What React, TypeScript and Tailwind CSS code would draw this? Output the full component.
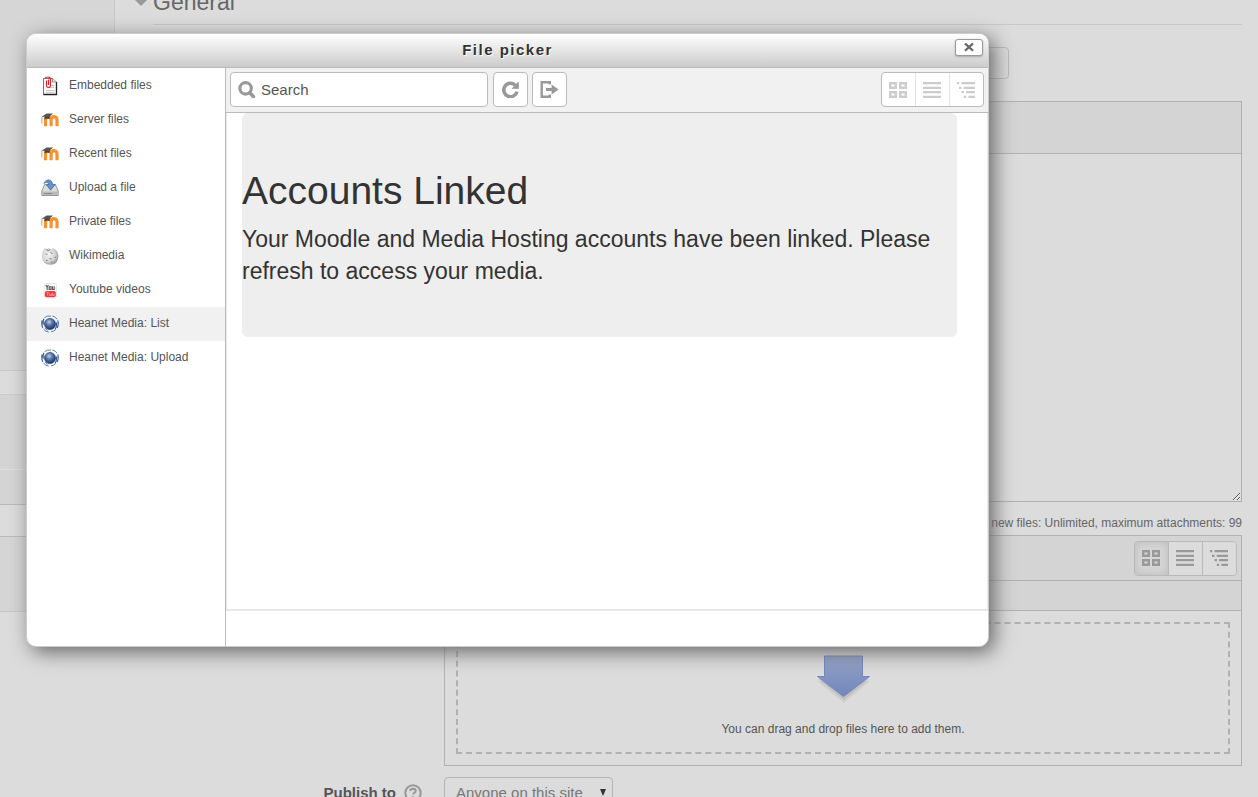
import React from 'react';

type IconProps = { className?: string };

function SearchIcon() {
  return (
    <svg width="18" height="18" viewBox="0 0 18 18" fill="none" stroke="#999" aria-hidden="true">
      <circle cx="7.6" cy="7.4" r="5.7" strokeWidth="3.2" />
      <path d="M11.8 11.8 15.4 15.4" strokeWidth="3.6" strokeLinecap="round" />
    </svg>
  );
}

function RefreshIcon() {
  return (
    <svg width="17" height="17" viewBox="0 0 17 17" fill="none" aria-hidden="true">
      <path d="M13.2 4.2A6.7 6.7 0 1 0 15 10.6" stroke="#999" strokeWidth="3.6" />
      <path d="M16.700 .8V7.600H10Z" fill="#999" stroke="#999" strokeWidth=".6" strokeLinejoin="round" />
    </svg>
  );
}

function LogoutIcon() {
  return (
    <svg width="19" height="17" viewBox="0 0 19 17" fill="none" aria-hidden="true">
      <path d="M9.800 3.600V1.200H1.700V15.800H9.800V13.400" stroke="#999" strokeWidth="2.400" />
      <path d="M6 7H11.600V3.400L18.600 8.500L11.600 13.600V10H6Z" fill="#999" />
    </svg>
  );
}

function GridIcon({ className }: IconProps) {
  return (
    <svg width="19" height="17" viewBox="0 0 19 17" fill="none" stroke="currentColor" strokeWidth="2.4" className={className} aria-hidden="true">
      <path d="M1.200 1.200H6.800V5.800H1.200ZM11.200 1.200H16.800V5.800H11.200ZM1.200 10.200H6.800V14.800H1.200ZM11.200 10.200H16.800V14.800H11.200Z" />
    </svg>
  );
}

function ListIcon({ className }: IconProps) {
  return (
    <svg width="19" height="17" viewBox="0 0 19 17" fill="currentColor" className={className} aria-hidden="true">
      <path d="M0 0H18V2.300H0ZM0 4.700H18V7H0ZM0 9H18V11.300H0ZM0 13.700H18V16H0Z" />
    </svg>
  );
}

function TreeIcon({ className }: IconProps) {
  return (
    <svg width="19" height="17" viewBox="0 0 19 17" fill="currentColor" className={className} aria-hidden="true">
      <path d="M0 0H2.300V2.300H0ZM4.500 0H18V2.300H4.500ZM2 4.700H4.500V7H2ZM6.700 4.700H18V7H6.700ZM4.500 9H7V11.300H4.500ZM9 9H18V11.300H9ZM6.800 13.700H9.200V16H6.800ZM11.300 13.700H18V16H11.300Z" />
    </svg>
  );
}

function EmbeddedIcon() {
  return (
    <svg width="18" height="20" viewBox="0 0 18 20" aria-hidden="true">
      <path d="M2.500 2.500H11.500L15.500 6V18.500H2.500Z" fill="#fafafa" stroke="#777" />
      <path d="M2.500 18.500H15.500V6" fill="none" stroke="#222" strokeWidth="1.300" />
      <path d="M11.500 2.500V6H15.500" fill="#ddd" stroke="#777" strokeWidth=".7" />
      <path d="M10.500 9.500H13.500M10.500 11.500H13.500M5 14.500H13.500M5 16.300H13.500" stroke="#ccc" />
      <path d="M5.500 4.500V9.500Q5.600 11.500 7.500 11.500Q9.500 11.500 9.500 9.500V3Q9.300 1 7 1Q4.500 1 3.800 2.600M7.500 3.500V9" fill="none" stroke="#ee1c24" strokeWidth="1.100" />
    </svg>
  );
}

function MoodleIcon() {
  return (
    <svg width="18" height="16" viewBox="0 0 18 16" aria-hidden="true">
      <path d="M4.500 14.200V8.200Q4.600 5.100 7.300 5.100Q10.100 5.100 10.100 8.200V14.200M10.100 8.200Q10.300 4.600 13.100 4.600Q16 4.700 16 8.200V14.200" fill="none" stroke="#f7922f" strokeWidth="3.200" />
      <path d="M3.500 4.600L9 4.200L8.400 7Q5.800 5.900 3.500 7.600Z" fill="#4a3f3a" />
      <path d="M.5 4.700L5.600 1.600L12 1.500L8.200 4.900Z" fill="#555" />
      <path d="M1 4.800L.7 11.500" stroke="#a98a70" strokeWidth=".8" />
    </svg>
  );
}

function UploadIcon() {
  return (
    <svg width="18" height="18" viewBox="0 0 18 18" aria-hidden="true">
      <path d="M3.700 5.500H14.300L17.200 12V16.500H.8V12Z" fill="#dcdedb" stroke="#8b8d89" strokeWidth=".9" />
      <path d="M1.200 12.500H16.800V16.100H1.200Z" fill="#b9bbb8" />
      <path d="M3 14.500H11" stroke="#888" strokeWidth="1.200" />
      <path d="M2.800 4.600Q5-.2 9.200 1.200Q11.400 2.200 11.600 5.400H14.200L9.600 11.200L5.400 5.800H7.800Q7.600 3.200 5.400 3.300Q4 3.400 2.800 4.600Z" fill="#6b93c7" stroke="#3f6eac" strokeWidth=".8" />
    </svg>
  );
}

function WikimediaIcon() {
  return (
    <svg width="18" height="20" viewBox="0 0 18 20" aria-hidden="true">
      <defs>
        <radialGradient id="wiki" cx=".4" cy=".4" r=".7">
          <stop offset="0" stopColor="#f4f4f4" />
          <stop offset=".6" stopColor="#d2d2d2" />
          <stop offset="1" stopColor="#858585" />
        </radialGradient>
      </defs>
      <path d="M3.600 2L5.600 3L8 1.800L9.400 3.400L12 2.200Q17.400 4.400 17.400 10.400Q16.800 18.600 9.400 18.800Q1.400 18.200.8 10.400Q.8 5.400 3.600 2Z" fill="url(#wiki)" />
      <path d="M4.500 8L6.500 8.400M9.500 6.500L11.500 7.500M8.500 12.500L10.500 13M13.500 11.500L15 11M5.600 3L7 5L9.400 3.400M5 14.500L6.500 14.500M10 16H11.500" fill="none" stroke="#777" strokeWidth=".9" />
    </svg>
  );
}

function YoutubeIcon() {
  return (
    <svg width="18" height="18" viewBox="0 0 18 18" aria-hidden="true">
      <rect x="3" y="2.500" width="12.500" height="14.500" rx="2" fill="#fafafa" stroke="#ddd" strokeWidth=".7" />
      <path d="M4.800 4L6.100 6.200L7.400 4M6.100 6.200V9M8.200 5.800H10V8.500H8.200ZM11.500 5.300V8.500H13.200V5.300" fill="none" stroke="#555" strokeWidth="1.100" />
      <rect x="3.800" y="10" width="11" height="6.200" rx="2" fill="#ee3a3c" />
      <path d="M5.600 11.500H7.800M6.700 11.500V14.800M8.800 12.500V14.500H10.200V12.500M11.600 11.800V14.500H13V12.800" fill="none" stroke="#fbb" strokeWidth=".7" />
    </svg>
  );
}

function HeanetIcon() {
  return (
    <svg width="18" height="18" viewBox="0 0 18 18" aria-hidden="true">
      <defs>
        <radialGradient id="globe" cx=".42" cy=".32" r=".7">
          <stop offset="0" stopColor="#c2cde0" />
          <stop offset=".45" stopColor="#5673a6" />
          <stop offset="1" stopColor="#142f66" />
        </radialGradient>
      </defs>
      <circle cx="9" cy="9" r="5.500" fill="url(#globe)" stroke="#1c3a70" strokeWidth=".7" />
      <path d="M1.200 5.500Q.2 9.500 1.800 12.800M16.800 5.500Q17.900 9.500 16.200 13M3 3.800Q1.600 6.500 2.400 9.500M15.500 7.500Q16 11.500 14 14.500" fill="none" stroke="#2b5590" strokeWidth="1.100" />
      <path d="M3.500 2.600Q6.500 .4 10 1.100M11.500 1Q15 2 16 4.200M2.600 14.200Q4.500 16.800 7.800 17.100M10 16.800Q13 16.600 14.600 14.800M4 13Q4.800 14.400 6.500 15.400" fill="none" stroke="#5d83b5" strokeWidth="1" />
    </svg>
  );
}

const repositories = [
  { name: 'Embedded files', Icon: EmbeddedIcon },
  { name: 'Server files', Icon: MoodleIcon },
  { name: 'Recent files', Icon: MoodleIcon },
  { name: 'Upload a file', Icon: UploadIcon },
  { name: 'Private files', Icon: MoodleIcon },
  { name: 'Wikimedia', Icon: WikimediaIcon },
  { name: 'Youtube videos', Icon: YoutubeIcon },
  { name: 'Heanet Media: List', Icon: HeanetIcon, active: true },
  { name: 'Heanet Media: Upload', Icon: HeanetIcon },
];

const views = [
  { label: 'Display folder with file icons', Icon: GridIcon },
  { label: 'Display folder with file details', Icon: ListIcon },
  { label: 'Display folder as file tree', Icon: TreeIcon },
];

function Sidebar() {
  return (
    <aside className="flex w-[115px] shrink-0 flex-col">
      <div className="h-[371px] border-r border-b border-[#c9c9c9] bg-[#d6d6d6]" />
      <div className="h-6 border-b border-[#cbcbcb]" />
      <div className="h-[75px] border-b border-[#dedede] bg-[#d4d4d4]" />
      <div className="h-[35px] border-b border-[#b9b9b9] bg-[#d4d4d4]" />
      <div className="h-8 border-b border-[#bbb]" />
      <div className="h-[75px] border-b border-[#c9c9c9] bg-[#d5d5d5]" />
    </aside>
  );
}

function FormPage() {
  return (
    <main className="min-w-0 flex-1 pr-4 pl-[38px]">
      <div className="relative h-[25px] border-b border-[#c8c8c8]">
        <svg className="absolute top-0 -left-[18px]" width="12" height="6" viewBox="0 0 12 6" aria-hidden="true">
          <path d="M0 0H12L6 6Z" fill="#999" />
        </svg>
        <h2 className="text-[23px] leading-[4px] text-[#666]">General</h2>
      </div>
      <div className="pl-[291px]">
        <input aria-label="Name" className="mt-[22px] block h-8 w-[565px] rounded-[4px] border border-[#bbb] px-3" />
        <div className="mt-[22px] border border-[#b1b1b1]">
          <div className="h-[52px] border-b border-[#b1b1b1] bg-[#d4d4d4]" />
          <textarea aria-label="Description" className="block h-[347px] w-full resize-y" />
        </div>
        <p className="pt-[14px] pb-1 text-right text-[12px] leading-[15px] text-[#666]">
          Maximum size for new files: Unlimited, maximum attachments: 99
        </p>
        <section className="border border-[#b1b1b1]">
          <div className="flex h-[45px] items-center justify-end border-b border-[#b1b1b1] bg-[#d4d4d4] pr-1">
            <div className="flex overflow-hidden rounded-[4px] border border-[#b9b9b9]">
              {views.map(({ label, Icon }, i) => (
                <button
                  key={label}
                  aria-label={label}
                  className={
                    i === 0
                      ? 'flex h-[33px] w-[33px] items-center justify-center bg-[#d6d6d6] text-[#999] shadow-[inset_0_0_10px_#bbb]'
                      : 'flex h-[33px] w-[34px] items-center justify-center border-l border-[#b9b9b9] bg-[#dcdcdc] text-[#999]'
                  }
                >
                  <Icon />
                </button>
              ))}
            </div>
          </div>
          <div className="h-[30px] border-b border-[#b1b1b1] bg-[#d4d4d4]" />
          <div className="p-[11px]">
            <div className="flex h-[132px] flex-col items-center border-2 border-dashed border-[#b1b1b1] pt-[30px]">
              <svg width="60" height="52" viewBox="0 0 60 52" className="shrink-0" aria-hidden="true">
                <defs>
                  <linearGradient id="arrow" x1="0" y1="0" x2="0" y2="1">
                    <stop offset="0" stopColor="#94a3c8" />
                    <stop offset="1" stopColor="#7187bb" />
                  </linearGradient>
                </defs>
                <path d="M11 6H50V27H57L31 49L4 27H11Z" fill="#000" opacity=".06" />
                <path d="M11 4H50V25H56L31 46L5 25H11Z" fill="#000" opacity=".08" />
                <path d="M11.500 2H49.500V22.500H56.500L30.500 42.500L4.500 22.500H11.500Z" fill="url(#arrow)" stroke="#7488bb" />
              </svg>
              <p className="mt-[15px] text-[12px] leading-[16px] text-[#555]">You can drag and drop files here to add them.</p>
            </div>
          </div>
        </section>
      </div>
      <div className="mt-[11px] flex">
        <div className="flex w-[291px] items-center justify-end gap-2 pr-[22px]">
          <label htmlFor="publish" className="text-[15px] font-bold text-[#555]">Publish to</label>
          <svg width="18" height="18" viewBox="0 0 18 18" fill="none" stroke="#999" aria-hidden="true">
            <circle cx="9" cy="9" r="7.700" strokeWidth="2" />
            <path d="M6.200 7Q6.400 4.700 9 4.700Q11.700 4.800 11.700 6.900Q11.700 8.200 10.300 8.900Q9.200 9.500 9.200 10.600M9.200 12V14" strokeWidth="2" />
          </svg>
        </div>
        <div className="relative">
          <select id="publish" className="h-8 w-[169px] appearance-none rounded-[4px] border border-[#b5b5b5] pl-[11px] text-[15px] text-[#777]">
            <option>Anyone on this site</option>
          </select>
          <svg className="pointer-events-none absolute top-[12px] right-[7px]" width="6" height="7" viewBox="0 0 6 7" aria-hidden="true">
            <path d="M0 0H6L3 7Z" fill="#333" />
          </svg>
        </div>
      </div>
    </main>
  );
}

function FilePicker() {
  return (
    <div
      role="dialog"
      aria-labelledby="picker-title"
      className="absolute top-[33px] left-[26px] flex h-[614px] w-[963px] flex-col overflow-hidden rounded-[10px] border border-[#ccc] bg-white shadow-[5px_5px_20px_0_#666]"
    >
      <header className="relative flex h-[34px] shrink-0 items-center justify-center border-b border-[#bbb] bg-linear-to-b from-white to-[#ccc] pb-[2px]">
        <h1 id="picker-title" className="text-[15px] leading-[20px] font-bold tracking-widest text-[#333] text-shadow-[1px_1px_1px_#fff]">
          File picker
        </h1>
        <button
          aria-label="Close"
          className="absolute top-[5px] right-[5px] flex h-[17px] w-[28px] items-center justify-center rounded-[3px] border border-[#999] bg-white shadow-[0_1px_2px_#aaa]"
        >
          <svg width="10" height="9" viewBox="0 0 10 9" stroke="#666" strokeWidth="2.200" aria-hidden="true">
            <path d="M1 .4 9 7.800M9 .4 1 7.800" />
          </svg>
        </button>
      </header>
      <div className="flex min-h-0 flex-1">
        <nav className="w-[199px] shrink-0 border-r border-[#bbb] pt-px">
          {repositories.map(({ name, Icon, active }) => (
            <a
              key={name}
              href="#"
              className={
                active
                  ? 'flex h-[34px] items-center bg-[#f1f1f1] pl-[14px] text-[12px] text-[#555]'
                  : 'flex h-[34px] items-center pl-[14px] text-[12px] text-[#555]'
              }
            >
              <Icon />
              <span className="pb-[2px] pl-[10px]">{name}</span>
            </a>
          ))}
        </nav>
        <div className="flex min-w-0 flex-1 flex-col">
          <div className="flex h-[45px] shrink-0 items-start gap-1 border-b border-[#bbb] bg-[#f1f1f1] px-1 pt-1">
            <label className="mr-px flex h-[35px] w-[258px] items-center gap-[5px] rounded-[4px] border border-[#bbb] bg-white pl-[7px]">
              <SearchIcon />
              <input aria-label="Search" defaultValue="Search" className="min-w-0 flex-1 pt-[2px] text-[15px] text-[#555] outline-none" />
            </label>
            <button aria-label="Refresh" className="flex h-[35px] w-[35px] items-center justify-center rounded-[4px] border border-[#bbb] bg-white">
              <RefreshIcon />
            </button>
            <button aria-label="Log out" className="flex h-[35px] w-[35px] items-center justify-center rounded-[4px] border border-[#bbb] bg-white">
              <LogoutIcon />
            </button>
            <div className="ml-auto flex overflow-hidden rounded-[4px] border border-[#bbb] bg-white">
              {views.map(({ label, Icon }, i) => (
                <button
                  key={label}
                  disabled
                  aria-label={label}
                  className={
                    i === 0
                      ? 'flex h-[33px] w-[33px] items-center justify-center pt-[2px] text-[#ccc]'
                      : 'flex h-[33px] w-[34px] items-center justify-center border-l border-[#e3e3e3] pt-[2px] text-[#ccc]'
                  }
                >
                  <Icon />
                </button>
              ))}
            </div>
          </div>
          <div className="flex-1 border-x border-b-2 border-[#e8e8e8] pr-[30px] pl-[15px]">
            <section className="h-[224px] rounded-[6px] bg-[#eee] pt-[55px] text-[#333]">
              <h2 className="text-[39px] leading-[46px]">Accounts Linked</h2>
              <p className="mt-[9px] text-[23px] leading-[32px]">
                Your Moodle and Media Hosting accounts have been linked. Please refresh to access your media.
              </p>
            </section>
          </div>
          <footer className="h-[35px] shrink-0" />
        </div>
      </div>
    </div>
  );
}

export default function App() {
  return (
    <div className="relative flex h-screen overflow-hidden bg-[#dcdcdc] font-['Liberation_Sans',Arial,sans-serif]">
      <Sidebar />
      <FormPage />
      <FilePicker />
    </div>
  );
}
